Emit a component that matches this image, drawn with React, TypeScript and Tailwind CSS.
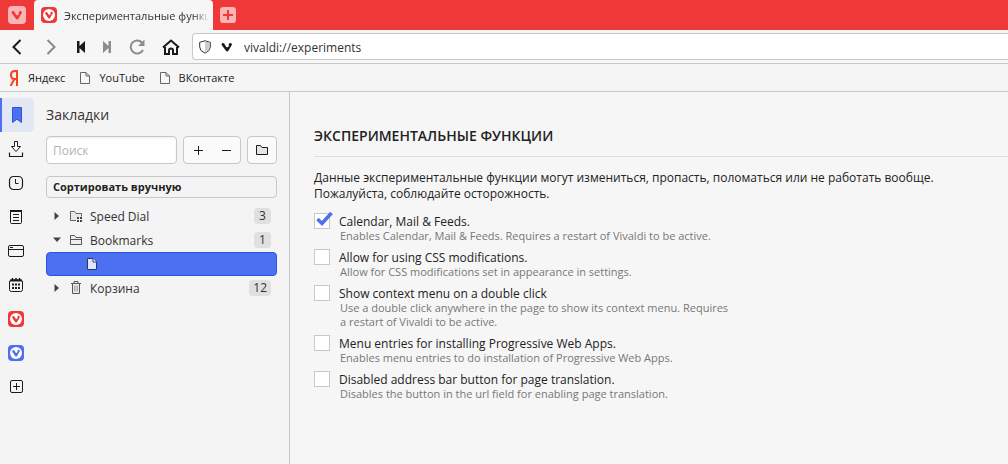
import React, { useState } from 'react';

const experiments = [
  {
    id: 'calendar-mail-feeds',
    title: 'Calendar, Mail & Feeds.',
    description: 'Enables Calendar, Mail & Feeds. Requires a restart of Vivaldi to be active.',
  },
  {
    id: 'css-mods',
    title: 'Allow for using CSS modifications.',
    description: 'Allow for CSS modifications set in appearance in settings.',
  },
  {
    id: 'double-click-menu',
    title: 'Show context menu on a double click',
    description:
      'Use a double click anywhere in the page to show its context menu. Requires a restart of Vivaldi to be active.',
  },
  {
    id: 'pwa-menu',
    title: 'Menu entries for installing Progressive Web Apps.',
    description: 'Enables menu entries to do installation of Progressive Web Apps.',
  },
  {
    id: 'translate-button',
    title: 'Disabled address bar button for page translation.',
    description: 'Disables the button in the url field for enabling page translation.',
  },
];

interface IconProps {
  className?: string;
}

const VivaldiGlyph: React.FC<IconProps> = ({ className = '' }) => (
  <svg viewBox="0 0 14 12" className={className} fill="currentColor" aria-hidden="true">
    <path d="M.4 2.9A1.9 1.9 0 0 1 3.8 2L6 5.7C7.300 7.100 9 6.300 9.200 4.600 9.250 3.900 9.200 3.500 9 3A1.900 1.900 0 1 1 12.900 3.200L8.700 10.400Q7.200 12.400 5.700 10.500L.8 3.900Z" />
  </svg>
);

const VivaldiBadge: React.FC<IconProps> = ({ className = '' }) => (
  <svg viewBox="0 0 16 16" className={className} aria-hidden="true">
    <rect width="16" height="16" rx="4" fill="currentColor" />
    <circle cx="8" cy="8" r="6" fill="white" />
    <path
      d="M4.200 6.200a1.200 1.200 0 0 1 2.200-.7L7.600 7.600c.9.800 1.900.2 1.900-.8 0-.4-.1-.6-.1-.9a1.200 1.200 0 1 1 2.400.3L9.100 10.900q-1 1.200-2 0L4.400 6.900Z"
      fill="currentColor"
    />
  </svg>
);

const PageIcon: React.FC<IconProps> = ({ className = '' }) => (
  <svg viewBox="0 0 12 14" className={className} aria-hidden="true">
    <path d="M1.500 1.500H7l3.500 3.500v7.500h-9Z" fill="#f8f8f8" stroke="currentColor" />
    <path d="M7 1.500V5h3.500" fill="none" stroke="currentColor" />
  </svg>
);

const FolderIcon: React.FC<IconProps> = ({ className = '' }) => (
  <svg viewBox="0 0 14 12" className={className} aria-hidden="true">
    <path d="M1.500 10.500v-9h4l1.500 2h5.500v7Z" fill="#e4e4e4" stroke="currentColor" />
  </svg>
);

const TreeFolderIcon = () => (
  <svg viewBox="0 0 14 12" className="h-3 w-3.5" fill="none" stroke="#555" aria-hidden="true">
    <path d="M1.500 10.500v-9h4l1.500 2h5.500v7Z" fill="#efefef" />
    <path d="M1.500 5.500h11" />
  </svg>
);

const SpeedDialIcon = () => (
  <svg viewBox="0 0 14 12" className="h-3 w-3.5" aria-hidden="true">
    <path d="M7 10.500H1.500v-9h4l1.500 2h5.500v3" fill="#e8e8e8" stroke="#666" />
    <path d="M8 7h2v2H8ZM11 7h2v2h-2ZM8 10h2v2H8ZM11 10h2v2h-2Z" fill="#444" />
  </svg>
);

const TrashIcon = () => (
  <svg viewBox="0 0 12 14" className="h-3.5 w-3" fill="none" stroke="#555" aria-hidden="true">
    <path d="M1 2.500h10M4 2V.5h4V2" />
    <path d="M2.500 3v9.500h7V3" fill="#ececec" />
    <path d="M4.500 4.500v6M6 4.500v6M7.500 4.500v6" stroke="#aaa" />
  </svg>
);

const panels = [
  {
    label: 'Закладки',
    icon: (
      <svg viewBox="0 0 16 16" className="size-4">
        <path d="M3.500.5h9v15L8 12.200 3.500 15.500Z" fill="#4d70f0" stroke="#2a55df" />
      </svg>
    ),
  },
  {
    label: 'Загрузки',
    icon: (
      <svg viewBox="0 0 16 16" className="size-4" fill="none" stroke="#1a1a1a">
        <path d="M1.500 11.500v4h13v-4" strokeWidth="1.200" />
        <path d="M6.500.5h3v5h3L8 10.500 3.500 5.500h3Z" fill="white" />
      </svg>
    ),
  },
  {
    label: 'История',
    icon: (
      <svg viewBox="0 0 16 16" className="size-4" fill="none" stroke="#1a1a1a">
        <rect x="1.500" y="1.500" width="13" height="13" rx="4" strokeWidth="1.200" />
        <path d="M7.500 4v4.500h3" />
      </svg>
    ),
  },
  {
    label: 'Заметки',
    icon: (
      <svg viewBox="0 0 16 16" className="size-4" fill="none" stroke="#1a1a1a">
        <rect x="2.500" y="2" width="11" height="12.500" rx="1" />
        <path d="M2 2h12" strokeWidth="2" />
        <path d="M5 5.500h6M5 8.500h6M5 11.500h6" />
      </svg>
    ),
  },
  {
    label: 'Окна',
    icon: (
      <svg viewBox="0 0 16 16" className="size-4" fill="none" stroke="#1a1a1a">
        <rect x=".5" y="2.500" width="15" height="11" rx="1.500" />
        <path d="M1 6.500h14" />
        <path d="M2 4.500h3" />
      </svg>
    ),
  },
  {
    label: 'Календарь',
    icon: (
      <svg viewBox="0 0 16 16" className="size-4" fill="none" stroke="#1a1a1a">
        <rect x="1.500" y="3" width="13" height="11.500" rx="2" />
        <path d="M2 3.500h12" strokeWidth="2" />
        <path d="M4.500 1v2M8 1v2M11.500 1v2" strokeWidth="1.500" />
        <path d="M4 7.500h8M4 11h8" strokeWidth="2" strokeDasharray="2 1" />
      </svg>
    ),
  },
  { label: 'Vivaldi', icon: <VivaldiBadge className="size-4 text-[#ef3939]" /> },
  { label: 'Vivaldi Community', icon: <VivaldiBadge className="size-4 text-[#4d70f0]" /> },
  {
    label: 'Добавить веб-панель',
    icon: (
      <svg viewBox="0 0 16 16" className="size-4" fill="none" stroke="#1a1a1a">
        <rect x="2.500" y="1.500" width="12" height="12" rx="1.500" />
        <path d="M8.500 4v7M5 7.500h7" />
      </svg>
    ),
  },
];

const TabBar = () => (
  <header className="flex h-[30px] items-stretch bg-[#ef3939]">
    <button aria-label="Меню Vivaldi" className="flex w-[34px] items-center justify-center">
      <span className="flex size-[18px] items-center justify-center rounded bg-[#f9b5b5]">
        <VivaldiGlyph className="h-2.5 w-3 text-[#ef3939]" />
      </span>
    </button>
    <div className="flex w-[179px] items-center gap-[7px] rounded-t-sm bg-[#f6f6f6] pr-1 pl-[7px]">
      <VivaldiBadge className="size-4 shrink-0 text-[#ef3939]" />
      <span className="overflow-hidden pt-0.5 text-[11px] whitespace-nowrap text-[#333] [mask-image:linear-gradient(to_right,black_90%,transparent)]">
        Экспериментальные функции
      </span>
    </div>
    <button aria-label="Новая вкладка" className="flex w-[30px] items-center justify-center">
      <svg viewBox="0 0 16 16" className="size-4">
        <rect width="16" height="16" rx="3" fill="#f9b5b5" />
        <path d="M8 3v10M3 8h10" stroke="#ef3939" strokeWidth="2" />
      </svg>
    </button>
  </header>
);

const navButton = 'flex w-[30px] items-center justify-center';

const AddressBar = () => {
  const [url, setUrl] = useState('vivaldi://experiments');

  return (
    <div className="flex h-[34px] items-center border-b border-[#c8c8c8] bg-[#f6f6f6] pl-0.5">
      <button aria-label="Назад" className={navButton}>
        <svg viewBox="0 0 16 16" className="size-4" fill="none" stroke="#1a1a1a" strokeWidth="2">
          <path d="M11.500 1 4.500 8l7 7" />
        </svg>
      </button>
      <button aria-label="Вперёд" className="flex w-[38px] items-center justify-center">
        <svg viewBox="0 0 16 16" className="size-4" fill="none" stroke="#888" strokeWidth="2">
          <path d="m4.500 1 7 7-7 7" />
        </svg>
      </button>
      <button aria-label="Перемотка назад" className="flex w-[22px] items-center justify-center">
        <svg viewBox="0 0 16 16" className="size-4" fill="#1a1a1a">
          <path d="M4 2h2.500v5L12 2v12L6.500 9v5H4Z" />
        </svg>
      </button>
      <button aria-label="Перемотка вперёд" className={navButton}>
        <svg viewBox="0 0 16 16" className="size-4" fill="#8c8c8c">
          <path d="M12 2H9.500v5L4 2v12l5.500-5v5H12Z" />
        </svg>
      </button>
      <button aria-label="Обновить" className={navButton}>
        <svg viewBox="0 0 16 16" className="size-4" fill="none" stroke="#8c8c8c" strokeWidth="2">
          <path d="M14 11A6.500 6.500 0 1 1 13 3.500" />
          <path d="M15.500.5V7H9Z" fill="#8c8c8c" stroke="none" />
        </svg>
      </button>
      <button aria-label="Домашняя страница" className="flex w-[38px] items-center justify-center">
        <svg viewBox="0 0 18 16" className="h-4 w-[18px]" fill="none" stroke="#1a1a1a" strokeWidth="2">
          <path d="M1 8.500 9 1.500l8 7" />
          <path d="M3 8v7h4v-3.500q0-2 2-2t2 2V15h4V8" />
        </svg>
      </button>
      <div className="ml-0.5 flex h-[27px] flex-1 items-center rounded-l border border-r-0 border-[#c8c8c8] bg-white pl-1.5">
        <svg viewBox="0 0 12 14" className="h-3.5 w-3" aria-hidden="true">
          <path d="M6 .8 11.300 2.300V7Q11.300 11 6 13.200.7 11 .7 7V2.300Z" fill="white" stroke="#333" />
          <path d="M6 1.500 10.700 2.800V7Q10.700 10.500 6 12.500Z" fill="#ccc" />
        </svg>
        <VivaldiGlyph className="ml-2.5 h-2.5 w-3 text-[#1a1a1a]" />
        <input
          type="text"
          aria-label="Адрес"
          value={url}
          onChange={(e) => setUrl(e.target.value)}
          className="ml-[11px] min-w-0 flex-1 bg-transparent pt-0.5 text-[12px] text-[#333] outline-none"
        />
      </div>
    </div>
  );
};

const BookmarkBar = () => (
  <nav className="flex h-7 items-center gap-3.5 border-b border-[#c8c8c8] bg-[#f5f5f5] pt-px pl-2 text-[11px] text-[#222]">
    <a href="#yandex" className="flex items-center gap-2">
      <svg viewBox="0 0 12 16" className="h-4 w-3" fill="none" stroke="#fc3f1d" strokeWidth="2" aria-hidden="true">
        <path d="M9 16V1H7Q3 1 3 5t3.500 4H9M6.500 9 2.500 16" />
      </svg>
      Яндекс
    </a>
    <a href="#youtube" className="flex items-center gap-2">
      <PageIcon className="h-3.5 w-3 text-[#666]" />
      YouTube
    </a>
    <a href="#vk" className="flex items-center gap-2">
      <PageIcon className="h-3.5 w-3 text-[#666]" />
      ВКонтакте
    </a>
  </nav>
);

const PanelSwitch = () => (
  <nav className="flex w-[34px] shrink-0 flex-col pt-1.5">
    {panels.map((panel, i) => (
      <button
        key={panel.label}
        aria-label={panel.label}
        className={
          i === 0
            ? 'flex h-[34px] items-center justify-center rounded-r border-l-2 border-[#4d70f0] bg-[#e2e7f4] pr-0.5'
            : 'flex h-[34px] items-center justify-center pr-0.5'
        }
      >
        {panel.icon}
      </button>
    ))}
  </nav>
);

interface TreeRowProps {
  icon: React.ReactNode;
  label: string;
  count: number;
  open?: boolean;
}

const TreeRow: React.FC<TreeRowProps> = ({ icon, label, count, open }) => (
  <li className="flex h-6 items-center pr-1.5 pl-1.5">
    <svg viewBox="0 0 10 10" className="size-2.5" fill="#444" aria-hidden="true">
      <path d={open ? 'M1 2.500h8L5 7Z' : 'M2.500 1v8L7 5Z'} />
    </svg>
    <span className="ml-[7px] flex w-3.5 justify-center">{icon}</span>
    <span className="ml-[7px] flex-1 pt-0.5 text-[12px]">{label}</span>
    <span className="flex h-4 min-w-[17px] items-center justify-center rounded-sm bg-[#e0e0e0] px-1 text-[12px]">
      {count}
    </span>
  </li>
);

const BookmarksPanel = () => (
  <aside className="w-64 shrink-0 border-r border-[#c8c8c8] px-3 pt-[13px] text-[#333]">
    <h2 className="text-[14px] leading-5">Закладки</h2>
    <div className="mt-[11px] flex h-7 gap-1.5">
      <input
        type="search"
        aria-label="Поиск"
        placeholder="Поиск"
        className="min-w-0 flex-1 rounded border border-[#c8c8c8] bg-white px-1.5 pt-0.5 text-[12px] shadow-[inset_0_1px_2px_#00000014] outline-none placeholder:text-[#b4b4b4]"
      />
      <div className="flex w-[58px] rounded border border-[#c8c8c8] bg-[#fafafa]">
        <button aria-label="Добавить" className="flex flex-1 items-center justify-center">
          <svg viewBox="0 0 9 9" className="size-[9px]" stroke="#1a1a1a">
            <path d="M4.500 0v9M0 4.500h9" />
          </svg>
        </button>
        <button aria-label="Удалить" className="flex flex-1 items-center justify-center">
          <svg viewBox="0 0 9 9" className="size-[9px]" stroke="#1a1a1a">
            <path d="M0 4.500h9" />
          </svg>
        </button>
      </div>
      <button
        aria-label="Новая папка"
        className="flex w-[30px] items-center justify-center rounded border border-[#c8c8c8] bg-[#fafafa]"
      >
        <FolderIcon className="h-3 w-3.5 text-[#1a1a1a]" />
      </button>
    </div>
    <select
      aria-label="Сортировка"
      className="mt-3 block h-[22px] w-full appearance-none rounded border border-[#c8c8c8] bg-[#f4f4f4] px-1.5 text-[11px] font-bold text-[#222]"
    >
      <option>Сортировать вручную</option>
      <option>Сортировать по названию</option>
    </select>
    <ul className="mt-1.5">
      <TreeRow icon={<SpeedDialIcon />} label="Speed Dial" count={3} />
      <TreeRow icon={<TreeFolderIcon />} label="Bookmarks" count={1} open />
      <li className="flex h-6 items-center rounded border border-[#2a55df] bg-[#4d70f0] pl-[39px]">
        <svg viewBox="0 0 12 14" className="h-3.5 w-3" aria-hidden="true">
          <path d="M1.500 1.500H7l3.500 3.500v7.500h-9Z" fill="#dfe5fb" stroke="#2b376c" />
          <path d="M7 1.500V5h3.500" fill="white" stroke="#2b376c" />
        </svg>
      </li>
      <TreeRow icon={<TrashIcon />} label="Корзина" count={12} />
    </ul>
  </aside>
);

const Experiments = () => {
  const [enabled, setEnabled] = useState<string[]>(['calendar-mail-feeds']);

  const toggle = (id: string) => {
    setEnabled(enabled.includes(id) ? enabled.filter((e) => e !== id) : [...enabled, id]);
  };

  return (
    <main className="min-w-0 flex-1 bg-[#f6f6f6] pt-[34px] pl-6 text-[#222]">
      <h1 className="border-b border-[#dedede] pb-2.5 text-[14px] leading-5 font-semibold">
        ЭКСПЕРИМЕНТАЛЬНЫЕ ФУНКЦИИ
      </h1>
      <p className="mt-[13px] text-[12px] leading-4">
        Данные экспериментальные функции могут измениться, пропасть, поломаться или не работать вообще.
        <br />
        Пожалуйста, соблюдайте осторожность.
      </p>
      <ul className="mt-[11px] flex flex-col gap-1.5">
        {experiments.map((item) => (
          <li key={item.id} className="flex gap-[9px]">
            <span className="relative size-4 shrink-0">
              <input
                type="checkbox"
                id={item.id}
                checked={enabled.includes(item.id)}
                onChange={() => toggle(item.id)}
                className="block size-4 appearance-none border border-[#c8c8c8] bg-white"
              />
              {enabled.includes(item.id) && (
                <svg
                  viewBox="0 0 18 16"
                  className="pointer-events-none absolute -top-0.5 left-0.5 h-4 w-[18px]"
                  fill="none"
                  stroke="#4d70f0"
                  strokeWidth="3.500"
                >
                  <path d="m1.500 8 4.500 4.500L15.500 2" />
                </svg>
              )}
            </span>
            <div>
              <label htmlFor={item.id} className="block pt-0.5 text-[12px] leading-[14px]">
                {item.title}
              </label>
              <p className="max-w-[390px] pl-px text-[11px] leading-[14px] text-[#777]">{item.description}</p>
            </div>
          </li>
        ))}
      </ul>
    </main>
  );
};

export default function App() {
  return (
    <div className="flex min-h-screen flex-col bg-[#f4f4f4] font-['Open_Sans','Noto_Sans',sans-serif]">
      <TabBar />
      <AddressBar />
      <BookmarkBar />
      <div className="flex flex-1">
        <PanelSwitch />
        <BookmarksPanel />
        <Experiments />
      </div>
    </div>
  );
}
